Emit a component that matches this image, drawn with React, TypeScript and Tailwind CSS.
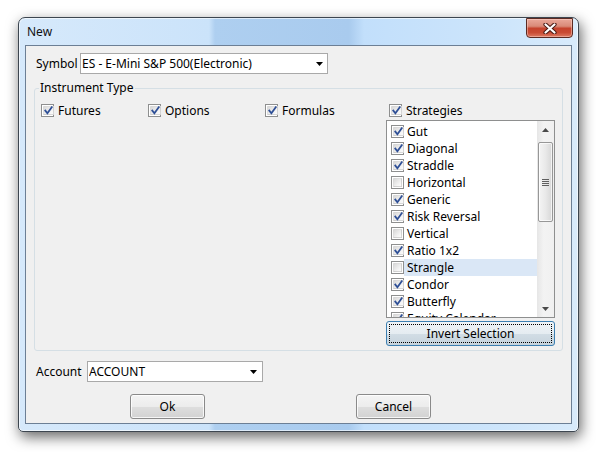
import React from "react";

const strategies: [string, boolean][] = [
  ["Gut", true],
  ["Diagonal", true],
  ["Straddle", true],
  ["Horizontal", false],
  ["Generic", true],
  ["Risk Reversal", true],
  ["Vertical", false],
  ["Ratio 1x2", true],
  ["Strangle", false],
  ["Condor", true],
  ["Butterfly", true],
  ["Equity Calendar", true],
];

function CheckBox({ checked }: { checked: boolean }) {
  return (
    <span className="w-[13px] h-[13px] shrink-0 border border-[#8e8f8f] bg-white p-[1px] flex">
      <span className="flex-1 flex items-center justify-center bg-[linear-gradient(135deg,#d9d9d9,#f4f4f4_70%,#fbfbfb)] border border-[#b8b8b8]/40">
        {checked && (
          <svg width="9" height="9" viewBox="0 0 9 9">
            <path d="M1.3 4.6 L3.4 7.2 L7.8 1.2" fill="none" stroke="#2e4f96" strokeWidth="1.8" strokeLinecap="square" />
          </svg>
        )}
      </span>
    </span>
  );
}

function Labeled({ checked, label }: { checked: boolean; label: string }) {
  return (
    <div className="flex items-center gap-[4px] h-[17px]">
      <CheckBox checked={checked} />
      <span>{label}</span>
    </div>
  );
}

function DropArrow() {
  return (
    <svg width="7" height="4" viewBox="0 0 7 4">
      <polygon points="0,0 7,0 3.5,4" fill="#000" />
    </svg>
  );
}

function Combo({ value, width, pad }: { value: string; width: string; pad: string }) {
  return (
    <div className={`${width} ${pad} h-[21px] border border-[#a9a9a9] bg-white flex items-center pl-[1px]`}>
      <span className="flex-1 truncate">{value}</span>
      <DropArrow />
    </div>
  );
}

function WinButton({ label, width }: { label: string; width: string }) {
  return (
    <button className={`${width} h-[25px] rounded-[3px] border border-[#8a8a8a] bg-[linear-gradient(180deg,#f4f4f4_0%,#ececec_50%,#dedede_51%,#d2d2d2_100%)] shadow-[inset_0_0_0_1px_rgba(255,255,255,0.8)] flex items-center justify-center`}>
      {label}
    </button>
  );
}

function ScrollBar() {
  return (
    <div className="w-[17px] h-full flex flex-col bg-[linear-gradient(90deg,#e6e6e6,#f3f3f3_40%,#f0f0f0)]">
      <div className="h-[17px] flex items-center justify-center">
        <svg width="7" height="4" viewBox="0 0 7 4">
          <polygon points="3.5,0 7,4 0,4" fill="#4a4a4a" />
        </svg>
      </div>
      <div className="mt-[4px] mx-[1px] h-[80px] rounded-[2px] border border-[#979797] bg-[linear-gradient(90deg,#f4f4f4,#e9e9e9_50%,#d7d7d7)] shadow-[inset_0_0_0_1px_rgba(255,255,255,0.7)] flex flex-col items-center justify-center gap-[1px]">
        <span className="w-[7px] h-[1px] bg-[#5f5f5f]" />
        <span className="w-[7px] h-[1px] bg-[#5f5f5f]" />
        <span className="w-[7px] h-[1px] bg-[#5f5f5f]" />
        <span className="w-[7px] h-[1px] bg-[#5f5f5f]" />
      </div>
      <div className="flex-1" />
      <div className="h-[17px] flex items-center justify-center">
        <svg width="7" height="4" viewBox="0 0 7 4">
          <polygon points="0,0 7,0 3.5,4" fill="#4a4a4a" />
        </svg>
      </div>
    </div>
  );
}

export default function App() {
  return (
    <div className="w-[596px] h-[452px] bg-white pt-[17px] pl-[18px] font-['Noto_Sans',sans-serif] text-[12px] leading-[16px] text-black">
      <div className="w-[561px] h-[415px] flex flex-col border border-[#3d4650] rounded-t-[7px] rounded-b-[5px] bg-[linear-gradient(90deg,#d6e9fb_0px,#cbe3fa_190px,#aecff0_196px,#a9cbee_330px,#c2dffb_345px,#cde5fb_480px,#d9ebfb_561px)] shadow-[2px_5px_14px_rgba(0,0,0,0.6),inset_0_0_0_1px_rgba(255,255,255,0.6)]">
        {/* title bar */}
        <div className="h-[27px] flex items-start justify-between pl-[8px] pr-[5px]">
          <span className="self-center text-[#111]">New</span>
          <button className="w-[47px] h-[20px] rounded-b-[4px] border border-[#5b2a22] bg-[linear-gradient(180deg,#eaa89a_0%,#d98a78_40%,#c5432d_52%,#c94b34_75%,#dc7a62_100%)] shadow-[inset_0_0_0_1px_rgba(255,220,210,0.45)] flex items-center justify-center">
            <svg width="14" height="11" viewBox="0 0 14 11">
              <path d="M2.5 1.5 L11.5 9.5 M11.5 1.5 L2.5 9.5" stroke="#4a1a14" strokeWidth="4.2" strokeLinecap="round" />
              <path d="M2.5 1.5 L11.5 9.5 M11.5 1.5 L2.5 9.5" stroke="#ffffff" strokeWidth="2.2" strokeLinecap="round" />
            </svg>
          </button>
        </div>

        {/* client area */}
        <div className="mx-[6px] mb-[7px] flex-1 border border-[#6c7f95] bg-[#f0f0f0] flex flex-col">
          <div className="mt-[7px] ml-[10px] flex items-center">
            <span className="w-[44px]">Symbol</span>
            <Combo value="ES - E-Mini S&P 500(Electronic)" width="w-[248px]" pad="pr-[4px]" />
          </div>

          <fieldset className="mt-[6px] ml-[8px] w-[529px] border border-[#d5dfe5] rounded-[3px] p-0">
            <legend className="ml-[4px] px-[1px] leading-[16px]">Instrument Type</legend>
            <div className="pt-[6px] pl-[6px] pb-[4px] flex">
              <div className="w-[107px]">
                <Labeled checked label="Futures" />
              </div>
              <div className="w-[117px]">
                <Labeled checked label="Options" />
              </div>
              <div className="w-[121px]">
                <Labeled checked label="Formulas" />
              </div>
              <div className="w-[169px] flex flex-col">
                <div className="ml-[3px]">
                  <Labeled checked label="Strategies" />
                </div>
                <div className="mt-[1px] h-[198px] border border-[#8e8f8f] bg-white flex overflow-hidden">
                  <div className="flex-1 pt-[2px] pl-[4px] overflow-hidden">
                    {strategies.map(([name, checked]) => (
                      <div key={name} className="h-[17px] flex items-center">
                        <CheckBox checked={checked} />
                        <span className={`pl-[3px] h-[17px] flex-1 flex items-center whitespace-nowrap ${name === "Strangle" ? "bg-[#dae7f6]" : ""}`}>
                          {name}
                        </span>
                      </div>
                    ))}
                  </div>
                  <ScrollBar />
                </div>
                <button className="mt-[3px] h-[25px] rounded-[3px] border border-[#3c7fb1] bg-[linear-gradient(180deg,#eef3f7_0%,#e5ecf1_50%,#d2dde5_51%,#c6d3dd_100%)] p-[2px] flex">
                  <span className="flex-1 border border-dotted border-black flex items-center justify-center">
                    Invert Selection
                  </span>
                </button>
              </div>
            </div>
          </fieldset>

          <div className="mt-[10px] ml-[10px] flex items-center">
            <span className="w-[51px]">Account</span>
            <Combo value="ACCOUNT" width="w-[176px]" pad="pr-[5px]" />
          </div>

          <div className="mt-[12px] ml-[104px] flex gap-[151px]">
            <WinButton label="Ok" width="w-[75px]" />
            <WinButton label="Cancel" width="w-[75px]" />
          </div>
        </div>
      </div>
    </div>
  );
}
